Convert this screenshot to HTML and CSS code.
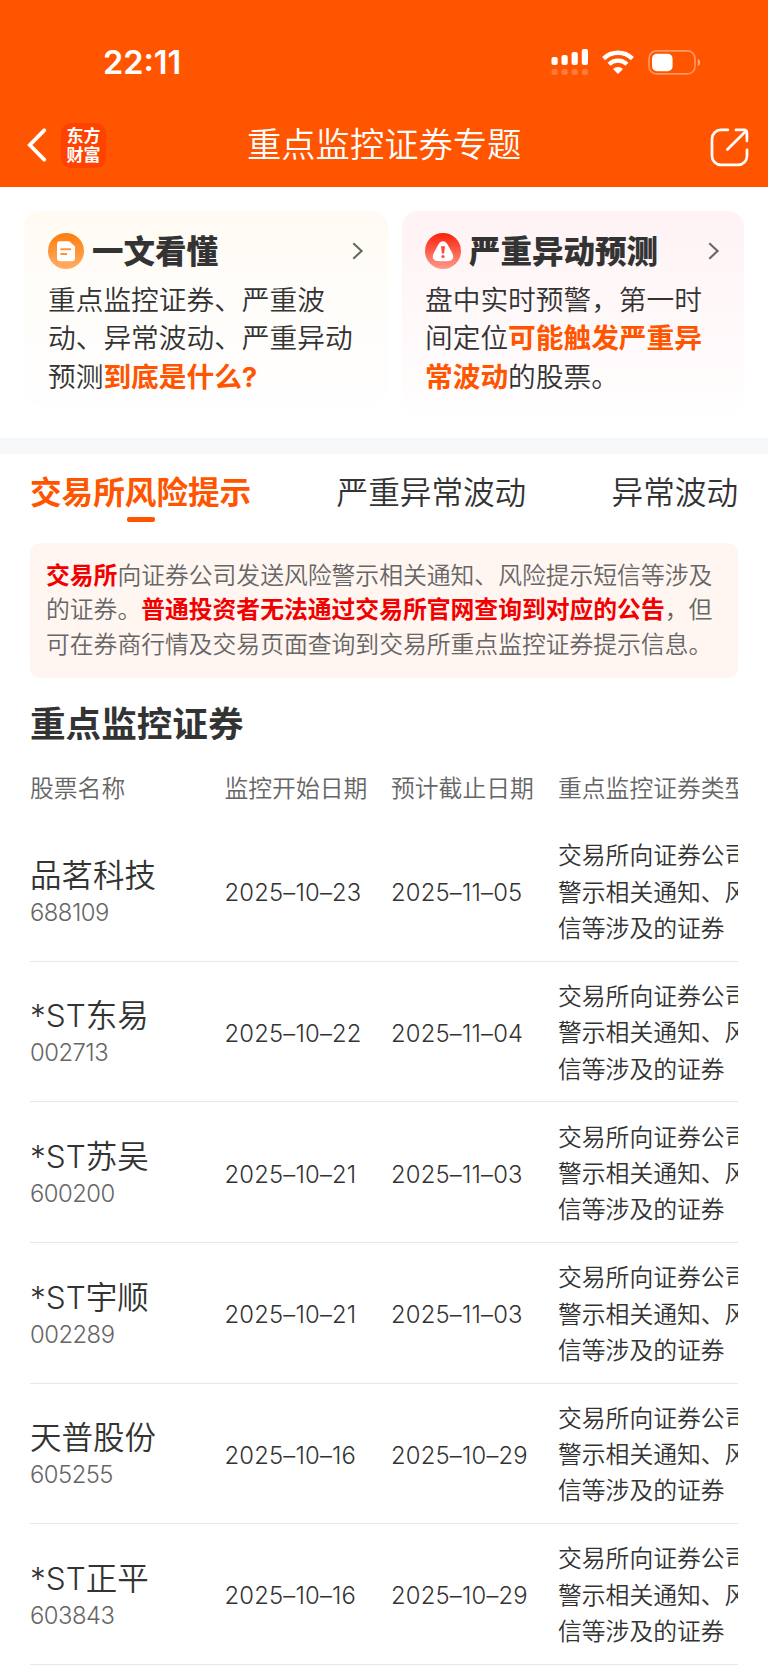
FILE: index.html
```
<!DOCTYPE html>
<html lang="zh-CN">
<head>
    <meta charset="UTF-8">
    <meta name="viewport" content="width=device-width, initial-scale=1.0">
    <title>重点监控证券专题</title>
    <link rel="stylesheet" href="styles.css">
</head>
<body>
    <header class="header">
        <div class="status-bar">
            <span class="time">22:11</span>
            <div class="status-icons">
                <svg class="signal" width="38" height="28" viewBox="0 0 38 28" fill="#fff">
                    <rect x="0.5" y="9" width="6.2" height="8" rx="2"/>
                    <rect x="10.5" y="7" width="6.2" height="10" rx="2"/>
                    <rect x="20.6" y="4" width="6.2" height="13" rx="2"/>
                    <rect x="30.8" y="1" width="6.2" height="16" rx="2"/>
                    <g opacity="0.22">
                        <rect x="0.5" y="21" width="6.2" height="6" rx="2"/>
                        <rect x="10.5" y="21" width="6.2" height="6" rx="2"/>
                        <rect x="20.6" y="21" width="6.2" height="6" rx="2"/>
                        <rect x="30.8" y="21" width="6.2" height="6" rx="2"/>
                    </g>
                </svg>
                <svg class="wifi" width="32" height="24" viewBox="0 0 32 24" fill="none" stroke="#fff" stroke-width="4.3">
                    <path d="M1.6 8.6a20.6 20.6 0 0 1 28.8 0"/>
                    <path d="M7 14.2a12.9 12.9 0 0 1 18 0"/>
                    <path d="M16 24l-5-5.1a7.3 7.3 0 0 1 10 0z" fill="#fff" stroke="none"/>
                </svg>
                <svg class="battery" width="53" height="25" viewBox="0 0 53 25">
                    <rect x="1" y="0.9" width="46" height="23" rx="7.5" fill="none" stroke="#fff" stroke-opacity="0.4" stroke-width="1.6"/>
                    <rect x="4" y="3.8" width="20.6" height="17.4" rx="5" fill="#fff"/>
                    <path d="M49.8 8.8c3 1.5 3 6 0 7.5z" fill="#fff" fill-opacity="0.5"/>
                </svg>
            </div>
        </div>
        <nav class="nav-bar">
            <div class="nav-left">
                <svg class="back" width="20" height="34" viewBox="0 0 20 34" fill="none" stroke="#fff" stroke-width="3.8" stroke-linecap="round" stroke-linejoin="miter">
                    <path d="M17.2 2.3L2.8 17l14.4 14.7"/>
                </svg>
                <div class="logo"><span>东方</span><span>财富</span></div>
            </div>
            <h1 class="page-title">重点监控证券专题</h1>
            <svg class="share" width="39" height="39" viewBox="0 0 39 39" fill="none" stroke="#fff" stroke-width="2.7" stroke-linecap="round" stroke-linejoin="round">
                <path d="M17.8 1.9H11a9 9 0 0 0-9 9v17a9 9 0 0 0 9 9h17a9 9 0 0 0 9-9V21.8"/>
                <path d="M26 1.9h8.3a2.5 2.5 0 0 1 2.6 2.6V13"/>
                <path d="M17.4 21.5L36 3"/>
            </svg>
        </nav>
    </header>

    <section class="cards">
        <div class="card card-guide">
            <div class="card-head">
                <svg class="card-icon" width="36" height="36" viewBox="0 0 36 36">
                    <defs>
                        <linearGradient id="orange" x1="0" y1="0" x2="0" y2="1">
                            <stop offset="0" stop-color="#ff7d0c"/>
                            <stop offset="1" stop-color="#ffad66"/>
                        </linearGradient>
                    </defs>
                    <circle cx="18" cy="18" r="18" fill="url(#orange)"/>
                    <path d="M11.5 8.2h9.8l5.7 5.3v11.8a3 3 0 0 1-3 3H12a3 3 0 0 1-3-3V10.7a2.5 2.5 0 0 1 2.5-2.5z" fill="#fff"/>
                    <path d="M13.2 16.3h9M13.2 20.9h5.2" stroke="#ff9438" stroke-width="2" stroke-linecap="round"/>
                </svg>
                <h2 class="card-title">一文看懂</h2>
                <svg class="arrow" width="12" height="18" viewBox="0 0 12 18" fill="none" stroke="#666" stroke-width="2.1">
                    <path d="M1.3 1.3L9.6 9l-8.3 7.7"/>
                </svg>
            </div>
            <p class="card-text">重点监控证券、严重波动、异常波动、严重异动预测<b>到底是什么?</b></p>
        </div>
        <div class="card card-forecast">
            <div class="card-head">
                <svg class="card-icon" width="36" height="36" viewBox="0 0 36 36">
                    <defs>
                        <linearGradient id="red" x1="0" y1="0" x2="0" y2="1">
                            <stop offset="0" stop-color="#fc2008"/>
                            <stop offset="1" stop-color="#ff9a8c"/>
                        </linearGradient>
                    </defs>
                    <circle cx="18" cy="18" r="18" fill="url(#red)"/>
                    <path d="M12.3 13.4C14.8 9 16 8.3 18 8.3s3.2.7 5.7 5.1l3.3 6c2.7 5.1.8 8.3-3.6 8.6-3.6.3-7.2.3-10.8 0-4.4-.3-6.3-3.5-3.6-8.600z" fill="#fff"/>
                    <path d="M16 13.3h4l-.9 7.3h-2.2z" fill="#fd4c3b"/>
                    <circle cx="18" cy="23.5" r="1.6" fill="#fd4c3b"/>
                </svg>
                <h2 class="card-title">严重异动预测</h2>
                <svg class="arrow" width="12" height="18" viewBox="0 0 12 18" fill="none" stroke="#666" stroke-width="2.1">
                    <path d="M1.3 1.3L9.6 9l-8.3 7.7"/>
                </svg>
            </div>
            <p class="card-text">盘中实时预警，第一时间定位<b>可能触发严重异常波动</b>的股票。</p>
        </div>
    </section>

    <div class="divider"></div>

    <div class="tabs">
        <span class="tab active">交易所风险提示</span>
        <span class="tab">严重异常波动</span>
        <span class="tab">异常波动</span>
    </div>

    <main class="content">
        <p class="notice"><b>交易所</b>向证券公司发送风险警示相关通知、风险提示短信等涉及的证券。<b>普通投资者无法通过交易所官网查询到对应的公告</b>，但可在券商行情及交易页面查询到交易所重点监控证券提示信息。</p>

        <h2 class="section-title">重点监控证券</h2>

        <div class="table">
            <div class="row table-head">
                <span>股票名称</span>
                <span>监控开始日期</span>
                <span>预计截止日期</span>
                <span>重点监控证券类型</span>
            </div>
            <div class="row">
                <div class="stock"><span class="name">品茗科技</span><span class="code">688109</span></div>
                <span class="date">2025–10–23</span>
                <span class="date">2025–11–05</span>
                <span class="type">交易所向证券公司发送风险警示相关通知、风险提示短信等涉及的证券</span>
            </div>
            <div class="row">
                <div class="stock"><span class="name">*ST东易</span><span class="code">002713</span></div>
                <span class="date">2025–10–22</span>
                <span class="date">2025–11–04</span>
                <span class="type">交易所向证券公司发送风险警示相关通知、风险提示短信等涉及的证券</span>
            </div>
            <div class="row">
                <div class="stock"><span class="name">*ST苏吴</span><span class="code">600200</span></div>
                <span class="date">2025–10–21</span>
                <span class="date">2025–11–03</span>
                <span class="type">交易所向证券公司发送风险警示相关通知、风险提示短信等涉及的证券</span>
            </div>
            <div class="row">
                <div class="stock"><span class="name">*ST宇顺</span><span class="code">002289</span></div>
                <span class="date">2025–10–21</span>
                <span class="date">2025–11–03</span>
                <span class="type">交易所向证券公司发送风险警示相关通知、风险提示短信等涉及的证券</span>
            </div>
            <div class="row">
                <div class="stock"><span class="name">天普股份</span><span class="code">605255</span></div>
                <span class="date">2025–10–16</span>
                <span class="date">2025–10–29</span>
                <span class="type">交易所向证券公司发送风险警示相关通知、风险提示短信等涉及的证券</span>
            </div>
            <div class="row">
                <div class="stock"><span class="name">*ST正平</span><span class="code">603843</span></div>
                <span class="date">2025–10–16</span>
                <span class="date">2025–10–29</span>
                <span class="type">交易所向证券公司发送风险警示相关通知、风险提示短信等涉及的证券</span>
            </div>
        </div>
    </main>
</body>
</html>
```
FILE: styles.css
```
* {
    box-sizing: border-box;
    margin: 0;
    padding: 0;
}
body {
    width: 768px;
    height: 1670px;
    overflow: hidden;
    background: #fff;
    color: #333;
    font-family: Inter, "Noto Sans CJK SC", sans-serif;
    font-weight: 350;
}
svg {
    display: block;
    flex-shrink: 0;
}

/* header */
.header {
    height: 187px;
    padding-top: 42px;
    background: #ff5500;
    color: #fff;
}
.status-bar {
    display: flex;
    justify-content: space-between;
    align-items: center;
    height: 40px;
    padding: 0 67px 0 103px;
}
.time {
    padding-top: 2px;
    font-size: 32.5px;
    font-weight: 600;
    line-height: 40px;
}
.status-icons {
    display: flex;
    align-items: center;
}
.wifi {
    margin: 0 14px 0 13px;
}
.nav-bar {
    display: grid;
    grid-template-columns: 220px auto 1fr;
    align-items: center;
    height: 50px;
    margin-top: 38px;
    padding: 0 19px 0 27px;
}
.nav-left {
    display: flex;
    align-items: center;
}
.logo {
    display: flex;
    flex-direction: column;
    justify-content: center;
    align-items: center;
    width: 45px;
    height: 45px;
    margin-left: 14px;
    padding-bottom: 2px;
    border-radius: 10px;
    background: #ff4200;
    font-family: "Noto Sans CJK SC", sans-serif;
    font-size: 17px;
    font-weight: 700;
    line-height: 19px;
}
.page-title {
    font-size: 34.3px;
    font-weight: 350;
    line-height: 50px;
}
.share {
    justify-self: end;
    margin-top: 5px;
}

/* cards */
.cards {
    display: flex;
    align-items: flex-start;
    gap: 14px;
    height: 251px;
    padding: 24px 24px 0;
}
.card {
    padding: 20px 24px 0;
    border-radius: 16px;
}
.card-guide {
    width: 364px;
    height: 194px;
    background: linear-gradient(#fffaf3, #fffdf9 40%, #fffefe);
}
.card-forecast {
    width: 342px;
    height: 206px;
    padding-left: 23px;
    background: linear-gradient(#fff3f4, #fff8f9 50%, #fffefe);
}
.card-head {
    display: flex;
    align-items: center;
    height: 40px;
}
.card-title {
    margin-left: 8px;
    font-size: 31.5px;
    font-weight: 900;
    line-height: 39px;
}
.arrow {
    margin-left: auto;
}
.card-text {
    margin-top: 10px;
    font-size: 27.7px;
    line-height: 38.3px;
}
.card-text b {
    color: #ff5500;
    font-weight: 700;
}

.divider {
    height: 16px;
    background: #f7f8fa;
}

/* tabs */
.tabs {
    display: flex;
    justify-content: space-between;
    height: 89px;
    padding: 19px 30px 0;
    font-size: 31.6px;
    line-height: 40px;
}
.active {
    color: #ff5500;
    font-weight: 700;
}
.active::after {
    content: "";
    display: block;
    width: 28px;
    height: 5px;
    margin: 4px auto 0;
    border-radius: 2px;
    background: #ff5500;
}

.content {
    padding: 0 30px;
}
.notice {
    height: 135px;
    padding: 16px 16px 0;
    border-radius: 10px;
    background: #fff5f1;
    color: #666;
    font-size: 23.8px;
    line-height: 34.3px;
}
.notice b {
    color: #f20000;
    font-weight: 700;
}
.section-title {
    margin-top: 23px;
    font-size: 35.6px;
    font-weight: 700;
    line-height: 48px;
}

/* stock table, last column runs past the right edge */
.table {
    margin-top: 6px;
    overflow: hidden;
}
.row {
    display: grid;
    grid-template-columns: 194.5px 166.5px 167px 287px;
    align-items: center;
    width: 815px;
    height: 140.64px;
    padding-top: 4px;
    border-bottom: 1.5px solid #e8e8e8;
    font-size: 23.8px;
}
.table-head {
    height: 66px;
    padding: 0 0 4px;
    border-bottom: none;
    color: #666;
}
.stock {
    display: flex;
    flex-direction: column;
}
.name {
    font-size: 31.5px;
    line-height: 39px;
}
.code {
    color: #666;
    letter-spacing: -0.5px;
    line-height: 35px;
}
.date {
    letter-spacing: 0.2px;
}
.type {
    line-height: 36.3px;
}
```
